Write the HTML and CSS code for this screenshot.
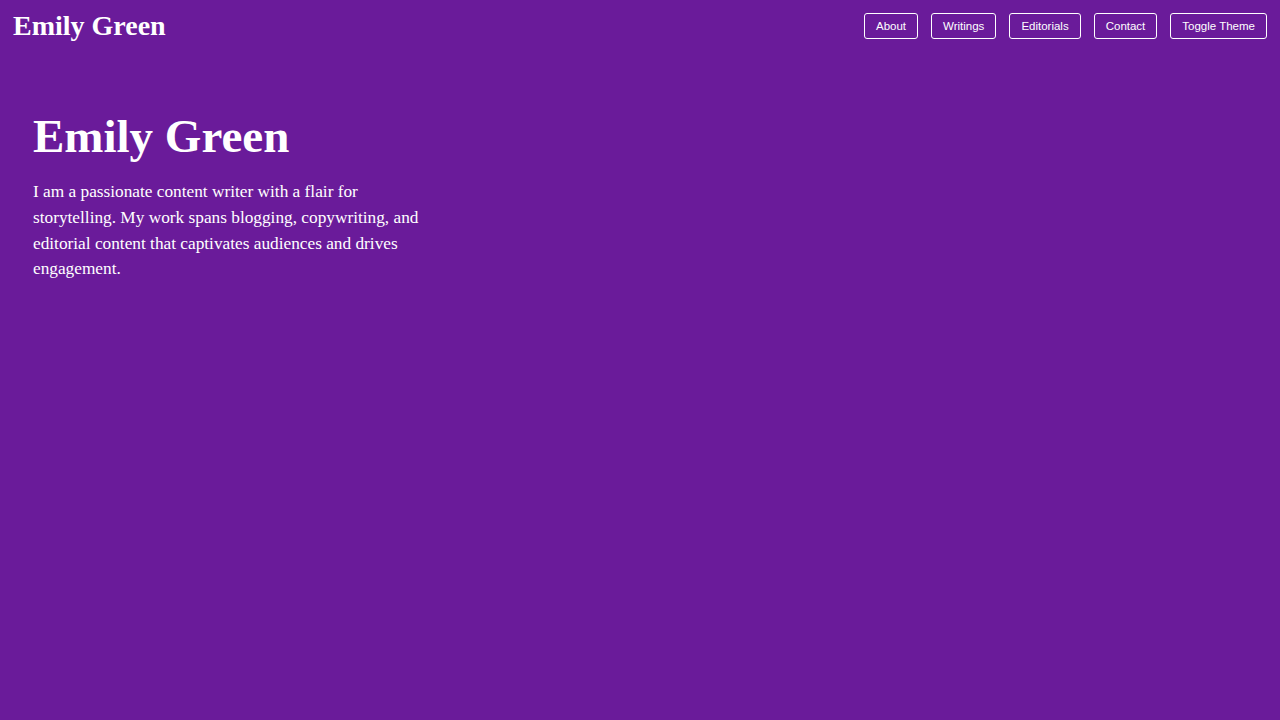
FILE: index.html
```html
<!DOCTYPE html>
<html lang="en">
<head>
<meta charset="utf-8">
<title>Emily Green</title>
<link rel="stylesheet" href="styles.css">
</head>
<body>
<header class="site-header">
  <div class="logo">Emily Green</div>
  <nav class="nav">
    <button class="nav-btn">About</button>
    <button class="nav-btn">Writings</button>
    <button class="nav-btn">Editorials</button>
    <button class="nav-btn">Contact</button>
    <button class="nav-btn">Toggle Theme</button>
  </nav>
</header>
<main class="hero">
  <h1 class="hero-title">Emily Green</h1>
  <p class="hero-text">I am a passionate content writer with a flair for storytelling. My work spans blogging, copywriting, and editorial content that captivates audiences and drives engagement.</p>
</main>
</body>
</html>
```
FILE: styles.css
```css
html, body {
  margin: 0;
  padding: 0;
}
body {
  background: #6a1b9a;
  color: #ffffff;
  font-family: "Liberation Serif", "Times New Roman", serif;
  min-height: 720px;
}
.site-header {
  display: flex;
  justify-content: space-between;
  align-items: center;
  padding: 0 13px;
  height: 52px;
}
.logo {
  font-size: 28px;
  font-weight: 700;
  line-height: 1;
}
.nav {
  display: flex;
  gap: 13px;
}
.nav-btn {
  font-family: "Liberation Sans", Arial, sans-serif;
  font-size: 11.5px;
  color: #ffffff;
  background: transparent;
  border: 1.5px solid #ffffff;
  border-radius: 3px;
  height: 26px;
  padding: 0 11px;
  cursor: pointer;
}
.hero {
  padding: 56px 33px;
}
.hero-title {
  margin: 0 0 15px;
  font-size: 47px;
  font-weight: 700;
  line-height: 1.2;
}
.hero-text {
  margin: 0;
  max-width: 400px;
  font-size: 17.3px;
  line-height: 25.6px;
}
```
